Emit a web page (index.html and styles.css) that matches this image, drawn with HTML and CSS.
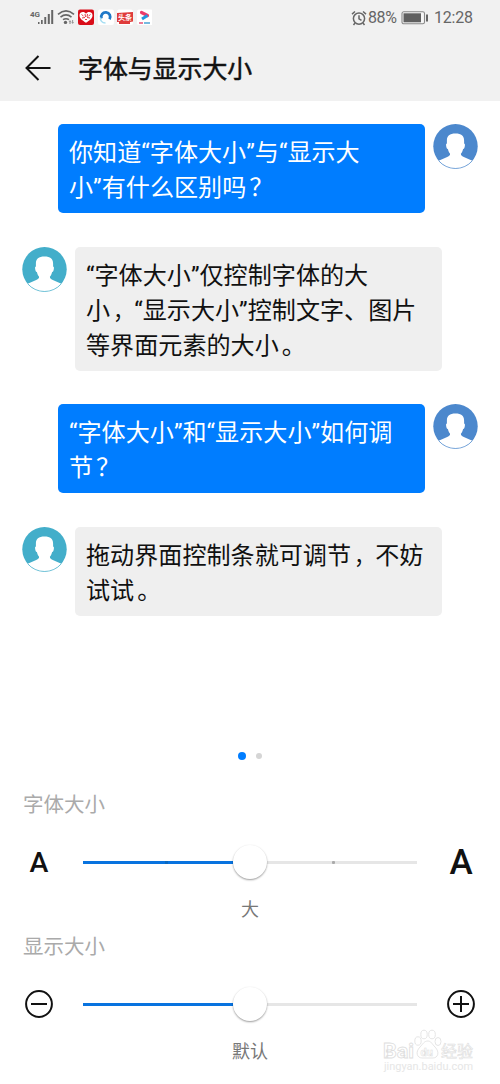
FILE: index.html
```html
<!DOCTYPE html>
<html lang="zh-CN">
<head>
<meta charset="utf-8">
<title>字体与显示大小</title>
<link rel="stylesheet" href="styles.css">
</head>
<body>
<svg class="defs" width="0" height="0" aria-hidden="true">
  <symbol id="person" viewBox="0 0 46 46">
    <circle cx="23" cy="22.800" r="22.700" fill="currentColor"/>
    <path fill="#fff" d="M23 9.800C29 9.800 31.800 12 31.800 17V20C33 20.200 32.700 22 32.200 24C31.900 25 31.400 25.500 30.800 25.600C30.300 28 29.300 29.500 28.500 30.500C28.500 32 29.200 33 31.500 33.800L40.200 37.600A22.700 22.700 0 0 1 5.800 37.600L14.500 33.800C16.800 33 17.500 32 17.500 30.500C16.700 29.500 15.700 28 15.200 25.600C14.600 25.500 14.100 25 13.800 24C13.300 22 13 20.200 14.200 20V17C14.200 12 17 9.800 23 9.800Z"/>
    <path d="M5.800 37.600A22.700 22.700 0 0 0 40.200 37.600" fill="none" stroke="currentColor" stroke-width=".7"/>
  </symbol>
</svg>
<div class="screen">
  <div class="top">
    <div class="status">
      <div class="status-left">
        <svg width="124" height="20" viewBox="28 7 124 20">
          <g fill="#666"><path d="M38 22h1.500v2H38zM41 20h1.700v4H41zM44.300 17h1.900v7h-1.900zM47.800 14h2v10h-2zM51.200 10h2v14h-2z"/>
          <circle cx="65.500" cy="22.400" r="1.700"/><path d="m70 20 1.400 2h-.8v2h-1.200v-2h-.8zM72.700 24l-1.400-2h.8v-2h1v2h.9z" opacity=".65"/></g>
          <g fill="none" stroke="#666" stroke-width="1.600"><path d="M58 14.300q8-7 16 0M60.500 17.200q5.500-4.500 11 0M63 19.700q3-2 6 0"/></g>
          <rect x="78" y="9.500" width="16" height="15.500" rx="2" fill="#d90d19"/>
          <path d="M86 22.800c-3.500-2.200-6.500-4.300-6.500-7.500 0-3.600 4.900-4.200 6.500-1.500 1.600-2.700 6.500-2.100 6.500 1.500 0 3.200-3 5.300-6.500 7.500z" fill="#fff"/>
          <path d="m81.500 14.500 2 1.500m1.500-2 .5 3m2-3-.5 3m3.500-2.500-2 1.500M82 18l3-.5m2 0 3 .5m-5 1.500h2" fill="none" stroke="#d90d19" stroke-width=".8"/>
          <rect x="98" y="9.500" width="16" height="15.500" rx="2" fill="#fff"/>
          <path d="M101.500 18.500a4.500 4.500 0 1 1 8 .8" fill="none" stroke="#2079c8" stroke-width="2.800"/>
          <path d="M100.500 17.500c-.5 3 1.500 5.500 5 5.500" fill="none" stroke="#a5def2" stroke-width="1.500"/>
          <rect x="117" y="9.500" width="16" height="15.500" rx="2" fill="#fff"/>
          <path d="M117 13l16-1v9.500l-3 .5v2h-11v-2h-2z" fill="#df3b3b"/>
          <rect x="137" y="9.500" width="16" height="15.500" rx="2" fill="#fff"/>
          <path d="m141.500 12.500 6 3" fill="none" stroke="#ed3b6b" stroke-width="3.200" stroke-linecap="round"/><path d="m147.500 15.500-5.500 3.500" stroke="#2496df" stroke-width="3"/>
          <path d="M139 23h4" stroke="#e45176" stroke-width="1.500"/><path d="M144 23h6" stroke="#4aa2d5" stroke-width="1.500"/>
          <text x="30" y="16.500" class="network">4G</text>
          <text x="118" y="20.200" class="news">头条</text>
        </svg>
      </div>
      <div class="status-right">
        <svg class="alarm" width="16" height="16" viewBox="0 0 16 16" fill="none" stroke="#666" stroke-width="1.500"><circle cx="8" cy="8.600" r="5.600"/><path d="M8 5.200v3.600l2.500 1.600M1 4.100 4 1.500M15 4.100 12 1.500M4 13l-1.500 2M12 13l1.500 2"/></svg>
        <span class="percent">88%</span>
        <svg class="battery" width="28" height="14" viewBox="0 0 28 14"><rect x="1" y=".8" width="22.500" height="12" rx="1.800" fill="#f6f6f6" stroke="#888" stroke-width="1.100"/><path d="M2.500 2.300h17.500v9h-17.500z" fill="#606060"/><path d="M25 3.500h2v7h-2z" fill="#666"/></svg>
        <span class="clock">12:28</span>
      </div>
    </div>
    <div class="titlebar">
      <svg width="26" height="26" viewBox="0 0 26 26" fill="none" stroke="#111" stroke-width="2"><path d="M25.500 13H2M13.500 1 1.500 13l12 12"/></svg>
      <h1>字体与显示大小</h1>
    </div>
  </div>
  <main class="chat">
    <div class="row sent"><p class="bubble">你知道“字体大小”与“显示大<br>小”有什么区别吗<span class="mark">？</span></p><svg class="avatar"><use href="#person"/></svg></div>
    <div class="row"><svg class="avatar"><use href="#person"/></svg><p class="bubble">“字体大小”仅控制字体的大<br>小<span class="comma">，</span>“显示大小”控制文字、图片<br>等界面元素的大小<span class="mark">。</span></p></div>
    <div class="row sent followup"><p class="bubble">“字体大小”和“显示大小”如何调<br>节<span class="mark">？</span></p><svg class="avatar"><use href="#person"/></svg></div>
    <div class="row"><svg class="avatar"><use href="#person"/></svg><p class="bubble">拖动界面控制条就可调节<span class="comma">，</span>不妨<br>试试<span class="mark">。</span></p></div>
  </main>
  <div class="pager"><i class="dot active"></i><i class="dot"></i></div>
  <section class="setting">
    <h2>字体大小</h2>
    <div class="control">
      <span class="letter small">A</span>
      <div class="slider ticks"><i class="fill"></i><i class="thumb"></i><i class="rest"></i></div>
      <span class="letter">A</span>
    </div>
    <p class="value">大</p>
  </section>
  <section class="setting">
    <h2>显示大小</h2>
    <div class="control">
      <svg class="zoom" viewBox="0 0 28 28"><circle cx="14" cy="14" r="12.900"/><path d="M6 14h16"/></svg>
      <div class="slider"><i class="fill"></i><i class="thumb"></i><i class="rest"></i></div>
      <svg class="zoom" viewBox="0 0 28 28"><circle cx="14" cy="14" r="12.900"/><path d="M6 14h16M14 6v16"/></svg>
    </div>
    <p class="value">默认</p>
  </section>
  <svg class="watermark" width="100" height="50" viewBox="380 1026 100 50">
    <g fill="#fff" stroke="#dedede" stroke-width=".8">
      <ellipse cx="418" cy="1041" rx="3.200" ry="4.200"/><ellipse cx="424" cy="1034.500" rx="3.200" ry="4.300"/><ellipse cx="432" cy="1034.500" rx="3.300" ry="4.300"/><ellipse cx="438" cy="1041.500" rx="3" ry="4"/>
      <path d="M428 1041c3 0 4 3 7 6 5 5 3 11-2 11h-11c-5 0-7-6-2-11 3-3 4-6 8-6z"/>
      <text x="383" y="1058" class="brand" textLength="31" lengthAdjust="spacingAndGlyphs">Bai</text>
      <text x="420.500" y="1056" class="du">du</text>
      <text x="441" y="1057" class="experience">经验</text>
    </g>
    <text x="384" y="1070" class="site" textLength="89" lengthAdjust="spacingAndGlyphs">jingyan.baidu.com</text>
  </svg>
</div>
</body>
</html>
```
FILE: styles.css
```css
* { box-sizing: border-box; }
body { margin: 0; background: #fff; font-family: Roboto, "Noto Sans CJK SC", sans-serif; color: #111; }
h1, h2, p { margin: 0; font-weight: 400; }
svg { display: block; flex: none; }
.defs { position: absolute; }
.screen { position: relative; width: 500px; height: 1084px; overflow: hidden; display: flex; flex-direction: column; background: #fff; }
.top { flex: none; height: 101px; background: #f1f1f1; }
.status { height: 36px; display: flex; justify-content: space-between; padding: 7px 27px 0 28px; }
.status-right { display: flex; align-items: center; height: 21px; color: #666; line-height: 21px; }
.percent { margin-left: 1px; width: 31px; font-size: 16px; letter-spacing: -.4px; }
.battery { margin: 0 5px 0 2px; }
.clock { width: 39px; font-size: 16px; letter-spacing: -.2px; }
.network { font: 700 8px Roboto, sans-serif; fill: #666; }
.news { font: 700 7px "Noto Sans CJK SC", sans-serif; fill: #fff; }
.titlebar { display: flex; align-items: center; height: 65px; gap: 27px; padding: 0 0 1px 25px; }
.titlebar h1 { padding-top: 4px; font-size: 24.9px; line-height: 36px; -webkit-text-stroke: .5px #111; }
.chat { height: 639px; flex: none; display: flex; flex-direction: column; gap: 34px; padding: 23px 22px 0; }
.row { display: flex; align-items: flex-start; gap: 8px; color: #43aeca; }
.sent { justify-content: flex-end; color: #4c88cd; }
.followup { margin-top: -1px; }
.avatar { width: 45px; height: 45px; }
.bubble { width: 367px; padding: 12px 0 7px 11px; border-radius: 5px; background: #efefef; color: #111; font-size: 24.1px; line-height: 35px; white-space: nowrap; }
.sent .bubble { background: #007dff; color: #fff; }
.mark { margin-left: 3px; }
.comma { margin-left: 3px; font-size: 21.1px; line-height: 1; }
.pager { height: 32px; flex: none; display: flex; align-items: center; justify-content: center; gap: 10px; }
.dot { width: 6px; height: 6px; border-radius: 50%; background: #d5d5d5; }
.dot.active { width: 8px; height: 8px; background: #007dff; }
.setting { height: 142px; flex: none; padding: 18px 23px 0; }
.setting h2 { font-size: 20.5px; line-height: 30px; color: #aaa; }
.control { height: 84px; display: flex; align-items: center; justify-content: space-between; }
.letter { width: 32px; padding-top: 2px; text-align: center; font: 500 35px/36px Roboto, sans-serif; }
.letter.small { font-size: 28.5px; }
.slider { width: 334px; display: flex; align-items: center; position: relative; }
.fill { width: 150px; height: 3px; background: #0873df; }
.thumb { width: 34px; height: 34px; border-radius: 50%; background: #fff; box-shadow: 0 1px 2px rgba(0,0,0,.4); z-index: 1; }
.rest { width: 150px; height: 3px; background: #e6e6e6; }
.ticks::before, .ticks::after { content: ""; position: absolute; left: 82px; width: 3px; height: 3px; background: #0868c1; }
.ticks::after { left: 249px; background: #aaa; border-radius: 1px; }
.zoom { width: 28px; height: 28px; margin: 0 2px; fill: none; stroke: #111; stroke-width: 2; }
.value { margin-top: -7px; text-align: center; font-size: 18px; line-height: 26px; color: #777; }
.watermark { position: absolute; left: 380px; top: 1026px; }
.brand { font: 700 20px Roboto, sans-serif; }
.du { font: 700 11px Roboto, sans-serif; stroke-width: .5; }
.experience { font: 400 16px "Noto Sans CJK SC", sans-serif; stroke-width: .6; }
.site { font: 10px Roboto, sans-serif; fill: #e6e6e6; }
```
